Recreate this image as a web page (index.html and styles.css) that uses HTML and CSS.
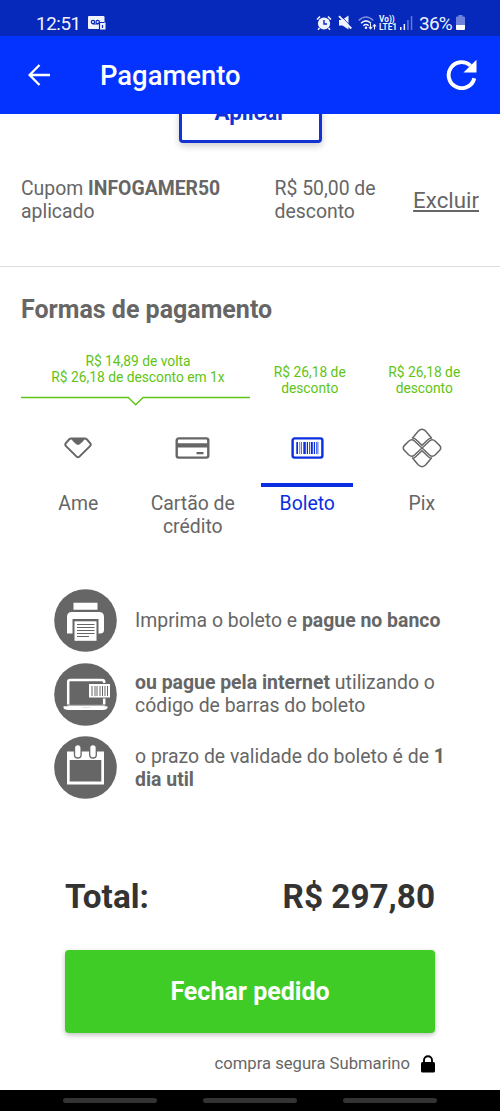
FILE: index.html
```html
<!DOCTYPE html>
<html lang="pt-BR">
<head>
<meta charset="utf-8">
<title>Pagamento</title>
<link rel="stylesheet" href="styles.css">
</head>
<body>
<div class="screen">
  <header class="status">
    <span class="clock">12:51</span>
    <svg class="voicemail" width="18" height="14" viewBox="0 0 18 14"><path d="M1 0h14.500a1 1 0 0 1 1 1v5.500h1v7h-5.500v-.5H1a1 1 0 0 1-1-1V1a1 1 0 0 1 1-1z" fill="#f0f3ff"/><g fill="none" stroke="#0628bb" stroke-width="1.200"><circle cx="5" cy="6" r="1.700"/><circle cx="9.700" cy="6" r="1.700"/><path d="M4.500 8h6M11.500 13V6.500h5M14.500 9v3"/></g></svg>
    <div class="indicators">
      <svg width="16" height="16" viewBox="0 0 16 16" class="alarm"><circle cx="8" cy="8.500" r="6.100" fill="#f0f3ff"/><path d="M8 5v4h3" fill="none" stroke="#0628bb" stroke-width="1.400"/><path d="M1 4.500 4 1.500M15 4.500l-3-3M3.500 13 2 14.700M12.500 13l1.500 1.700" stroke="#f0f3ff" stroke-width="1.600"/></svg>
      <svg width="14" height="15" viewBox="0 0 14 15" class="mute"><path d="M1 5h3l6.500-4.500v14L4.500 10.500H1z" fill="#f0f3ff"/><path d="M2.800 1 14 12.300" stroke="#0628bb" stroke-width="1"/><path d="M1 1.200 13.300 13.500" stroke="#f0f3ff" stroke-width="1.900"/></svg>
      <svg width="19" height="15" viewBox="0 0 19 15" class="wifi"><g fill="none" stroke="#f0f3ff" stroke-width="1.500"><path d="M.7 4.500Q8 -2.500 15.300 4.500" opacity=".5"/><path d="M3 7.200q5-4.600 10 0M5.300 9.700q2.700-2.400 5.400 0"/></g><circle cx="8" cy="11.800" r="1.300" fill="#f0f3ff"/><path d="M12.500 7.500v5M10.800 11l1.700 1.900 1.700-1.900M16.500 13.500V9M14.800 10.500l1.700-1.900 1.700 1.900" fill="none" stroke="#f0f3ff" stroke-width="1.100"/></svg>
      <span class="volte"><span>Vo))</span><span>LTE1</span></span>
      <svg width="13" height="14" viewBox="0 0 13 14" class="signal"><g fill="#f0f3ff"><path d="M0 11h1.500v3H0zM3.600 8h1.500v6H3.600z"/><path d="M7.200 4h1.500v10H7.200zM10.800 0h1.500v14h-1.500z" opacity=".4"/></g></svg>
      <span class="percent">36%</span>
      <svg width="9" height="15" viewBox="0 0 9 15" class="battery"><path d="M2.500 0h4v1.500H8a1 1 0 0 1 1 1V10H0V2.500a1 1 0 0 1 1-1h1.500z" fill="#6f83dc"/><path d="M0 10h9v4a1 1 0 0 1-1 1H1a1 1 0 0 1-1-1z" fill="#fff"/></svg>
    </div>
  </header>
  <nav class="appbar">
    <svg class="back" width="22" height="22" viewBox="0 0 22 22"><path d="M22 11H2M11.500 1 1.600 11l9.900 10" fill="none" stroke="#fff" stroke-width="2.300"/></svg>
    <h1 class="title">Pagamento</h1>
    <svg class="reload" width="31" height="31" viewBox="0 0 31 31"><path d="M28.300 19.200A13 13 0 1 1 24.500 6.600" fill="none" stroke="#fff" stroke-width="3.900"/><path d="M30.500 .7V13.500H17.500z" fill="#fff"/></svg>
  </nav>
  <main class="content">
    <div class="apply-clip"><button class="apply">Aplicar</button></div>
    <section class="coupon">
      <p class="coupon-name">Cupom <b>INFOGAMER50</b><br>aplicado</p>
      <p class="coupon-value">R$ 50,00 de<br>desconto</p>
      <a class="remove">Excluir</a>
    </section>
    <h2 class="heading">Formas de pagamento</h2>
    <section class="offers">
      <div class="offer offer-wide"><p class="offer-text">R$ 14,89 de volta<br>R$ 26,18 de desconto em 1x</p>
        <svg width="229" height="10" viewBox="0 0 229 10"><path d="M0 1.500h107.300l7.400 7.200 7.400-7.200H229" fill="none" stroke="#5fc414" stroke-width="1.400"/></svg></div>
      <p class="offer offer-text">R$ 26,18 de<br>desconto</p>
      <p class="offer offer-text">R$ 26,18 de<br>desconto</p>
    </section>
    <section class="methods">
      <div class="method"><div class="method-icon"><svg width="28" height="22" viewBox="0 0 28 22"><path d="M7.300 1.500h13.400Q22 1.500 23 2.500L26.300 6.300q1 1.500-.3 2.800L15.400 19.600q-1.400 1.400-2.800 0L2 9.100Q.7 7.800 1.700 6.300L5 2.500Q6 1.500 7.300 1.500z" fill="none" stroke="#666" stroke-width="2"/><path d="M7 1.500h14l-2 2.700-3.200 3q-1.800 1.300-3.600 0L9 4.200z" fill="#666"/></svg></div><span>Ame</span></div>
      <div class="method"><div class="method-icon"><svg width="35" height="22" viewBox="0 0 35 22"><rect x="1.700" y="1.400" width="31.600" height="19.200" rx="2" fill="none" stroke="#666" stroke-width="2.400"/><path d="M1 6.200h32v4.300H1zM21.500 15h7v2.200h-7z" fill="#666"/></svg></div><span>Cartão de<br>crédito</span></div>
      <div class="method selected"><div class="method-icon"><svg width="33" height="22" viewBox="0 0 33 22"><rect x="1.600" y="1.400" width="29.800" height="19.200" rx="2" fill="none" stroke="#0a2ee0" stroke-width="2.400"/><path d="M5.300 5h1.700v12H5.300zM8.500 5h.7v12h-.7zM10.300 5h.7v12h-.7zM12.300 5h2.500v12h-2.500zM15.800 5h1.200v12h-1.200zM18 5h.8v12H18zM19.800 5h2v12h-2zM22.800 5H24v12h-1.200zM25 5h.7v12H25zM26.500 5h.8v12h-.8z" fill="#0a2ee0"/></svg></div><span>Boleto</span></div>
      <div class="method"><div class="method-icon"><svg width="40" height="40" viewBox="0 0 40 40"><g fill="none" stroke="#666" stroke-width="1.500" stroke-linejoin="round"><path d="M10.500 9.900 16.200 3.200Q20 -.6 23.800 3.200L29.500 9.900Q27.800 9.900 26.400 11.300L20 17.300 13.600 11.300Q12.200 9.900 10.500 9.900z"/><path d="M10.500 30.100 16.200 36.800Q20 40.600 23.800 36.800L29.500 30.100Q27.800 30.100 26.400 28.700L20 22.700 13.600 28.700Q12.200 30.100 10.500 30.100z"/><path d="M20 20 12.200 12.700Q9.600 10.500 6.700 13.200L2.500 17.400Q0 20 2.500 22.600L6.700 26.800Q9.600 29.500 12.200 27.300zM20 20 27.800 12.700Q30.400 10.500 33.300 13.200L37.500 17.400Q40 20 37.500 22.600L33.300 26.800Q30.400 29.500 27.800 27.300z"/></g></svg></div><span>Pix</span></div>
    </section>
    <ul class="steps">
      <li class="step"><svg width="63" height="63" viewBox="0 0 63 63"><circle cx="31.500" cy="31.500" r="31.300" fill="#666"/><path d="M19.500 13.700h24v7h-24zM13 44.500V28q0-5 5-5h27q5 0 5 5v13q0 3.500-4 3.500h-1.500V30h-26v14.500z" fill="#fff"/><path d="M20.500 32.300h22v19.500h-22z" fill="#fff"/><path d="M23 35.500h17.500M23 38.500h17.500M23 41.500h17.500M23 44.500h17.500M23 47.500h12" stroke="#666" stroke-width="1"/></svg><p>Imprima o boleto e <b>pague no banco</b></p></li>
      <li class="step"><svg width="63" height="63" viewBox="0 0 63 63"><circle cx="31.500" cy="31.500" r="31.300" fill="#666"/><rect x="14.200" y="17" width="36" height="26" rx="2" fill="none" stroke="#fff" stroke-width="2.500"/><path d="M8 41.500h49v1H8z" fill="#666"/><path d="M9.500 43.300H27l1 1h8l1-1h16.500v1q0 2.700-5 2.700h-34q-5 0-5-2.700z" fill="#fff"/><path d="M34.500 20.500h22v14.500h-22z" fill="#fff" stroke="#666"/><path d="M38 23v10M41 23v10M43 23v10M46 23v10M48.500 23v10M51 23v10M53.500 23v10" stroke="#666" stroke-width="1"/></svg><p><b>ou pague pela internet</b> utilizando o<br>código de barras do boleto</p></li>
      <li class="step"><svg width="63" height="63" viewBox="0 0 63 63"><circle cx="31.500" cy="31.500" r="31.300" fill="#666"/><path d="M13 15.500h37v33H13z" fill="#fff"/><path d="M15.700 24h31.600v21.500H15.700z" fill="#666"/><g fill="#fff" stroke="#666" stroke-width="1.300"><rect x="20.500" y="8.500" width="6.600" height="13.500" rx="3.300"/><rect x="35.700" y="8.500" width="6.600" height="13.500" rx="3.300"/></g></svg><p>o prazo de validade do boleto é de <b>1<br>dia util</b></p></li>
    </ul>
    <section class="checkout">
      <div class="total"><span>Total:</span><span>R$ 297,80</span></div>
      <button class="submit">Fechar pedido</button>
      <p class="secure">compra segura Submarino <svg width="14" height="18" viewBox="0 0 14 18"><path d="M3 8V5.300a4 4 0 0 1 8 0V8" fill="none" stroke="#000" stroke-width="1.900"/><rect y="7" width="14" height="10.500" rx="1.500"/></svg></p>
    </section>
  </main>
  <footer class="system-nav"><i></i><i></i><i></i></footer>
</div>
</body>
</html>
```
FILE: styles.css
```css
* { box-sizing: border-box; }
body, h1, h2, p, ul { margin: 0; padding: 0; }
body { font-family: Roboto, "Liberation Sans", sans-serif; color: #666; background: #fff; }
svg { display: block; flex: none; }
.screen { width: 500px; height: 1111px; display: flex; flex-direction: column; overflow: hidden; white-space: nowrap; }
.status { height: 36px; flex: none; background: #0628bb; color: #f0f3ff; display: flex; align-items: flex-start; padding: 12px 35px 0 36px; }
.clock { font-size: 18.8px; line-height: 24px; width: 52px; letter-spacing: -0.4px; }
.voicemail { margin-top: 4px; }
.indicators { display: flex; margin-left: auto; }
.alarm, .mute { margin-top: 3px; }
.mute { margin-left: 6px; }
.wifi { margin: 4px 0 0 6px; }
.volte { display: flex; flex-direction: column; margin: 3px 0 0 2px; width: 19px; font-size: 8.3px; font-weight: 700; line-height: 8px; }
.signal { margin: 4px 0 0 2px; }
.percent { font-size: 19px; line-height: 24px; width: 34px; margin: 0 3px 0 6px; letter-spacing: -0.8px; }
.battery { margin-top: 3px; }
.appbar { height: 78px; flex: none; background: #0433ff; color: #fff; display: flex; align-items: center; padding: 0 23px 0 28px; }
.title { font-size: 27.4px; font-weight: 500; line-height: 36px; margin-left: 50px; padding-top: 2px; }
.reload { margin-left: auto; margin-top: -2px; }
.content { flex: 1; min-height: 0; }
.apply-clip { height: 50px; overflow: hidden; display: flex; align-items: flex-start; justify-content: center; }
.apply { width: 143px; height: 58px; margin-top: -29.500px; flex: none; border: 3px solid #1233d2; border-radius: 4px; background: #fff; color: #1233d2; font: 700 22.4px/48px Roboto, sans-serif; padding: 0 0 4px; box-shadow: 0 3px 7px rgba(0,0,0,.2); }
.coupon { height: 103px; border-bottom: 1px solid #ddd; display: grid; grid-template-columns: 253.500px 1fr auto; padding: 13px 21px 0; font-size: 19.400px; line-height: 23px; }
.remove { text-decoration: underline; font-size: 22.3px; line-height: 47px; }
.heading { font-size: 25px; line-height: 34px; padding: 26px 21px 0; }
.offers { display: grid; grid-template-columns: 229px 1fr 1fr; padding: 0 21px; height: 80px; margin-top: 26px; }
.offer-text { text-align: center; font-size: 13.800px; line-height: 16.300px; color: #5fc414; }
.offers > .offer-text { padding: 11px 0 0 5px; }
.offer-wide .offer-text { padding-left: 5px; margin-bottom: 10.400px; }
.methods { display: grid; grid-template-columns: repeat(4, 1fr); padding: 0 21px; height: 157px; margin-top: -12px; font-size: 19.400px; line-height: 22.600px; text-align: center; }
.method-icon { height: 66px; display: flex; justify-content: center; align-items: center; width: 92px; margin: 0 auto 6px; border-bottom: 4px solid transparent; padding-bottom: 9px; }
.selected { color: #0a2ee0; }
.selected .method-icon { border-color: #0a2ee0; }
.steps { list-style: none; padding: 11px 0 0 54px; display: flex; flex-direction: column; gap: 10.600px; }
.step { display: flex; align-items: center; gap: 18px; height: 63px; font-size: 19.420px; line-height: 23px; }
.checkout { padding: 74px 65px 0; }
.total { display: flex; justify-content: space-between; color: #333; font-size: 33.300px; font-weight: 700; line-height: 48px; }
.submit { display: block; width: 370px; height: 83px; margin-top: 29px; border: 0; border-radius: 4px; background: #3fcc26; color: #fff; font: 700 25px/83px Roboto, sans-serif; padding: 0; box-shadow: 0 2px 5px rgba(0,0,0,.25); }
.secure { display: flex; justify-content: flex-end; gap: 11px; font-size: 16.650px; line-height: 22px; margin-top: 20px; }
.secure svg { margin-top: 2px; }
.system-nav { height: 21px; flex: none; background: #000; display: flex; justify-content: center; gap: 46px; padding-top: 8px; }
.system-nav i { width: 94px; height: 5px; border-radius: 3px; background: #333; }
```
